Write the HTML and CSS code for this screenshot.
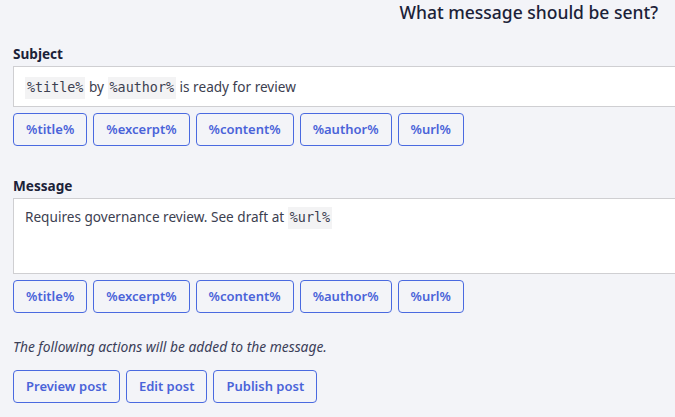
FILE: index.html
```html
<!DOCTYPE html>
<html>
<head>
<meta charset="utf-8">
<link rel="stylesheet" href="styles.css">
</head>
<body>
<div class="page">
  <h2 class="title">What message should be sent?</h2>
  <div class="field subject">
    <label class="label">Subject</label>
    <div class="input"><code>%title%</code> by <code>%author%</code> is ready for review</div>
    <div class="tags">
      <button class="btn">%title%</button>
      <button class="btn">%excerpt%</button>
      <button class="btn">%content%</button>
      <button class="btn">%author%</button>
      <button class="btn">%url%</button>
    </div>
  </div>
  <div class="field message">
    <label class="label">Message</label>
    <div class="input textarea">Requires governance review. See draft at <code>%url%</code></div>
    <div class="tags">
      <button class="btn">%title%</button>
      <button class="btn">%excerpt%</button>
      <button class="btn">%content%</button>
      <button class="btn">%author%</button>
      <button class="btn">%url%</button>
    </div>
  </div>
  <p class="note">The following actions will be added to the message.</p>
  <div class="tags actions">
    <button class="btn">Preview post</button>
    <button class="btn">Edit post</button>
    <button class="btn">Publish post</button>
  </div>
</div>
</body>
</html>
```
FILE: styles.css
```css
html, body {
  margin: 0;
  padding: 0;
  overflow: hidden;
  background: #f3f4f8;
}
body {
  font-family: "Noto Sans", "Open Sans", sans-serif;
  color: #1e2437;
}
.page {
  width: 720px;
  padding: 0 0 0 13px;
  box-sizing: border-box;
}
.title {
  margin: 0;
  width: 645px;
  text-align: right;
  font-size: 17.5px;
  font-weight: 500;
  line-height: 25px;
  color: #1b2238;
}
.field {
  display: flex;
  flex-direction: column;
}
.subject { margin-top: 20px; }
.message { margin-top: 31px; }
.label {
  font-size: 13.6px;
  font-weight: 700;
  line-height: 18px;
  color: #1b2238;
  margin-bottom: 3px;
}
.input {
  background: #fff;
  border: 1px solid #cfcfd2;
  height: 41px;
  box-sizing: border-box;
  padding: 0 11px;
  font-size: 13.6px;
  line-height: 39px;
  color: #3c4050;
}
.textarea {
  height: 76px;
  line-height: 22px;
  padding-top: 7px;
}
code {
  font-family: "DejaVu Sans Mono", "Liberation Mono", monospace;
  font-size: 13.4px;
  background: #f3f3f4;
  padding: 3px 2px 4px;
  color: #3c4050;
}
.tags {
  display: flex;
  gap: 6px;
  margin-top: 6px;
}
.btn {
  font-family: "Noto Sans", sans-serif;
  font-size: 13px;
  font-weight: 600;
  color: #4a63d9;
  background: #f3f4f8;
  border: 1px solid #4a6ae0;
  border-radius: 4px;
  height: 33px;
  padding: 0 12px;
  line-height: 31px;
}
.note {
  margin: 25px 0 0;
  font-size: 13.8px;
  font-style: italic;
  color: #3b4058;
  line-height: 18px;
}
.actions { margin-top: 14px; }
```
